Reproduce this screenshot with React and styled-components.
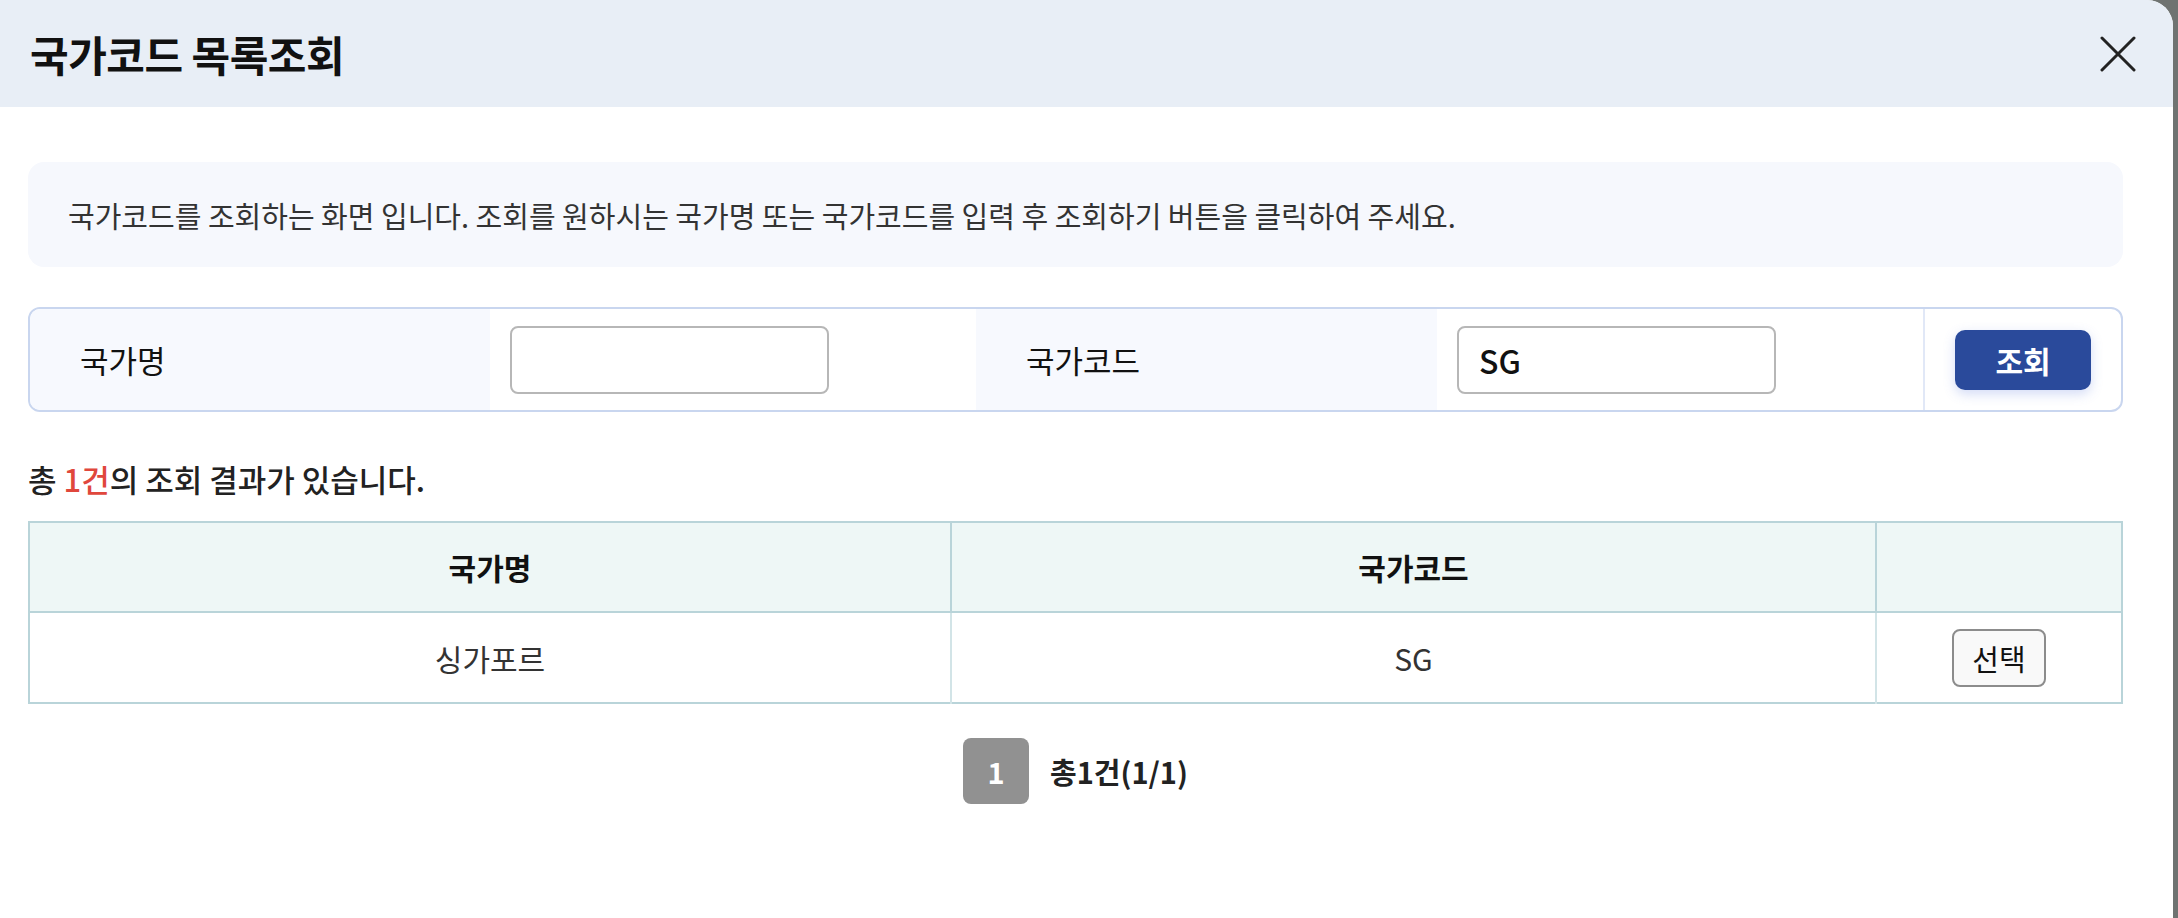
import React from "react";
import styled, { createGlobalStyle } from "styled-components";

const GlobalStyle = createGlobalStyle`
  html, body {
    margin: 0;
    padding: 0;
    background: #6f7371;
    font-family: "Noto Sans CJK KR", "Noto Sans", sans-serif;
  }
  * { box-sizing: border-box; }
`;

const Modal = styled.div`
  width: 2173px;
  height: 918px;
  background: #fff;
  border-top-right-radius: 26px;
  overflow: hidden;
  display: flex;
  flex-direction: column;
`;

const Header = styled.div`
  height: 107px;
  background: #e8eef6;
  display: flex;
  align-items: center;
  justify-content: space-between;
  padding: 0 36px 0 30px;
`;

const Title = styled.h1`
  margin: 0;
  font-size: 42px;
  font-weight: 700;
  color: #111;
  letter-spacing: -0.5px;
`;

const CloseButton = styled.button`
  border: 0;
  background: none;
  padding: 0;
  width: 38px;
  height: 38px;
  display: flex;
  align-items: center;
  justify-content: center;
  cursor: pointer;
`;

const Body = styled.div`
  padding: 55px 50px 0 28px;
  display: flex;
  flex-direction: column;
`;

const InfoBox = styled.div`
  height: 105px;
  background: #f6f8fd;
  border-radius: 16px;
  display: flex;
  align-items: center;
  padding: 0 40px;
  font-size: 29px;
  color: #333;
`;

const SearchBox = styled.div`
  margin-top: 40px;
  height: 105px;
  border: 2px solid #c9d6ef;
  border-radius: 12px;
  overflow: hidden;
  display: grid;
  grid-template-columns: 460px 486px 461px 486px 1fr;
`;

const LabelCell = styled.div`
  background: #f7f9fe;
  display: flex;
  align-items: center;
  padding-left: 50px;
  font-size: 31px;
  color: #111;
`;

const InputCell = styled.div`
  background: #fff;
  display: flex;
  align-items: center;
  padding-left: 20px;
`;

const TextInput = styled.input`
  width: 319px;
  height: 68px;
  border: 2px solid #b7b7b7;
  border-radius: 8px;
  padding: 0 20px;
  font-family: inherit;
  font-size: 32px;
  font-weight: 500;
  color: #111;
  outline: none;
`;

const ButtonCell = styled.div`
  border-left: 2px solid #e1e8f7;
  display: flex;
  align-items: center;
  justify-content: center;
`;

const SearchButton = styled.button`
  width: 136px;
  height: 60px;
  border: 0;
  border-radius: 10px;
  background: #2a4a9b;
  color: #fff;
  font-family: inherit;
  font-size: 30px;
  font-weight: 700;
  box-shadow: 0 4px 12px rgba(80, 110, 220, 0.25);
  cursor: pointer;
`;

const ResultText = styled.p`
  margin: 47px 0 0;
  font-size: 31px;
  font-weight: 500;
  color: #222;
  line-height: 40px;
`;

const Count = styled.span`
  color: #e0473c;
`;

const Table = styled.table`
  margin-top: 22px;
  width: 100%;
  border-collapse: collapse;
  table-layout: fixed;
  border: 2px solid #b9d4d9;
`;

const Th = styled.th`
  width: ${(p) => p.$w || "auto"};
  height: 90px;
  background: #eef7f6;
  border: 2px solid #b9d4d9;
  font-size: 30px;
  font-weight: 700;
  color: #111;
`;

const Td = styled.td`
  height: 91px;
  border-left: 2px solid #d2e4e7;
  text-align: center;
  font-size: 30px;
  color: #333;
  &:first-child { border-left: 0; }
`;

const SelectButton = styled.button`
  width: 94px;
  height: 58px;
  border: 2px solid #8c8c8c;
  border-radius: 8px;
  background: #f9f9f9;
  font-family: inherit;
  font-size: 29px;
  color: #111;
  cursor: pointer;
`;

const Pagination = styled.div`
  margin-top: 34px;
  display: flex;
  justify-content: center;
  align-items: center;
  gap: 21px;
`;

const PageNumber = styled.span`
  width: 66px;
  height: 66px;
  border-radius: 8px;
  background: #919191;
  color: #fff;
  font-size: 29px;
  font-weight: 700;
  display: flex;
  align-items: center;
  justify-content: center;
`;

const PageSummary = styled.span`
  font-size: 29px;
  font-weight: 700;
  color: #222;
`;

export default function App() {
  return (
    <>
      <GlobalStyle />
      <Modal>
        <Header>
          <Title>국가코드 목록조회</Title>
          <CloseButton aria-label="닫기">
            <svg width="36" height="36" viewBox="0 0 36 36" fill="none">
              <path
                d="M2 2L34 34M34 2L2 34"
                stroke="#222"
                strokeWidth="3"
                strokeLinecap="round"
              />
            </svg>
          </CloseButton>
        </Header>
        <Body>
          <InfoBox>
            국가코드를 조회하는 화면 입니다. 조회를 원하시는 국가명 또는 국가코드를 입력 후 조회하기 버튼을 클릭하여 주세요.
          </InfoBox>
          <SearchBox>
            <LabelCell>국가명</LabelCell>
            <InputCell>
              <TextInput defaultValue="" />
            </InputCell>
            <LabelCell>국가코드</LabelCell>
            <InputCell>
              <TextInput defaultValue="SG" />
            </InputCell>
            <ButtonCell>
              <SearchButton>조회</SearchButton>
            </ButtonCell>
          </SearchBox>
          <ResultText>
            총 <Count>1건</Count>의 조회 결과가 있습니다.
          </ResultText>
          <Table>
            <thead>
              <tr>
                <Th $w="922px">국가명</Th>
                <Th $w="925px">국가코드</Th>
                <Th />
              </tr>
            </thead>
            <tbody>
              <tr>
                <Td>싱가포르</Td>
                <Td>SG</Td>
                <Td>
                  <SelectButton>선택</SelectButton>
                </Td>
              </tr>
            </tbody>
          </Table>
          <Pagination>
            <PageNumber>1</PageNumber>
            <PageSummary>총1건(1/1)</PageSummary>
          </Pagination>
        </Body>
      </Modal>
    </>
  );
}
